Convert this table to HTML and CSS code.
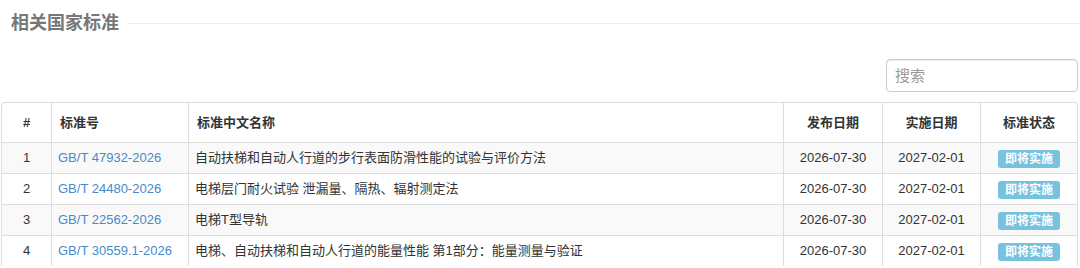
FILE: index.html
```html
<!DOCTYPE html>
<html lang="zh-CN">
<head>
<meta charset="utf-8">
<title>相关国家标准</title>
<link rel="stylesheet" href="styles.css">
</head>
<body>
<div class="section-title"><h3>相关国家标准</h3><span class="rule"></span></div>
<div class="toolbar"><input class="search" type="text" placeholder="搜索"></div>
<div class="table-wrap">
<table class="std-table">
<colgroup><col class="c-no"><col class="c-code"><col class="c-name"><col class="c-pub"><col class="c-impl"><col class="c-state"></colgroup>
<thead>
<tr><th class="center">#</th><th>标准号</th><th>标准中文名称</th><th class="center">发布日期</th><th class="center">实施日期</th><th class="center">标准状态</th></tr>
</thead>
<tbody>
<tr><td class="center">1</td><td><a href="#">GB/T 47932-2026</a></td><td>自动扶梯和自动人行道的步行表面防滑性能的试验与评价方法</td><td class="center">2026-07-30</td><td class="center">2027-02-01</td><td class="center"><span class="badge">即将实施</span></td></tr>
<tr><td class="center">2</td><td><a href="#">GB/T 24480-2026</a></td><td>电梯层门耐火试验 泄漏量、隔热、辐射测定法</td><td class="center">2026-07-30</td><td class="center">2027-02-01</td><td class="center"><span class="badge">即将实施</span></td></tr>
<tr><td class="center">3</td><td><a href="#">GB/T 22562-2026</a></td><td>电梯T型导轨</td><td class="center">2026-07-30</td><td class="center">2027-02-01</td><td class="center"><span class="badge">即将实施</span></td></tr>
<tr><td class="center">4</td><td><a href="#">GB/T 30559.1-2026</a></td><td>电梯、自动扶梯和自动人行道的能量性能 第1部分：能量测量与验证</td><td class="center">2026-07-30</td><td class="center">2027-02-01</td><td class="center"><span class="badge">即将实施</span></td></tr>
</tbody>
</table>
</div>
</body>
</html>
```
FILE: styles.css
```css
html, body {
  margin: 0;
  padding: 0;
  background: #fff;
}
body {
  font-family: "Liberation Sans", Arial, "Noto Sans CJK SC", sans-serif;
  font-size: 13px;
  color: #333;
}
.section-title {
  display: flex;
  align-items: center;
  height: 46px;
  padding-left: 11px;
}
.section-title h3 {
  margin: 0;
  font-size: 18px;
  font-weight: bold;
  color: #777;
  line-height: 20px;
}
.section-title .rule {
  flex: 1;
  height: 1px;
  background: #eee;
  margin-left: 8px;
}
.toolbar {
  display: flex;
  justify-content: flex-end;
  padding-right: 2px;
  margin-top: 13px;
}
.search {
  box-sizing: border-box;
  width: 192px;
  height: 33px;
  border: 1px solid #ccc;
  border-radius: 4px;
  padding: 0 8px;
  font-family: "Liberation Sans", Arial, "Noto Sans CJK SC", sans-serif;
  font-size: 15px;
  color: #555;
  outline: none;
  box-shadow: inset 0 1px 1px rgba(0,0,0,.075);
}
.search::placeholder {
  color: #999;
}
.table-wrap {
  margin-top: 10px;
  margin-left: 1px;
  width: 1077px;
  box-sizing: border-box;
  border: 1px solid #ddd;
  border-bottom: none;
  border-radius: 4px 4px 0 0;
  overflow: hidden;
}
.std-table {
  width: 1075px;
  table-layout: fixed;
  border-collapse: separate;
  border-spacing: 0;
}
.c-no { width: 49px; }
.c-code { width: 137px; }
.c-name { width: 595px; }
.c-pub { width: 99px; }
.c-impl { width: 98px; }
.c-state { width: 97px; }
.std-table th,
.std-table td {
  padding: 0 6px;
  text-align: left;
  white-space: nowrap;
  overflow: hidden;
  border-left: 1px solid #ddd;
}
.std-table th:first-child,
.std-table td:first-child {
  border-left: none;
}
.std-table th {
  height: 39px;
  line-height: 39px;
  padding: 0 8px;
  font-weight: bold;
  color: #333;
}
.std-table td {
  height: 30px;
  line-height: 30px;
  border-top: 1px solid #ddd;
}
.std-table tbody tr:nth-child(odd) td {
  background: #f9f9f9;
}
.std-table .center {
  text-align: center;
}
.std-table a {
  color: #4a89c8;
  text-decoration: none;
}
.badge {
  display: inline-block;
  vertical-align: middle;
  padding: 0 6.5px;
  height: 18px;
  line-height: 18px;
  font-size: 12px;
  font-weight: bold;
  color: #fff;
  background: #77c2df;
  border-radius: 3px;
}
```
